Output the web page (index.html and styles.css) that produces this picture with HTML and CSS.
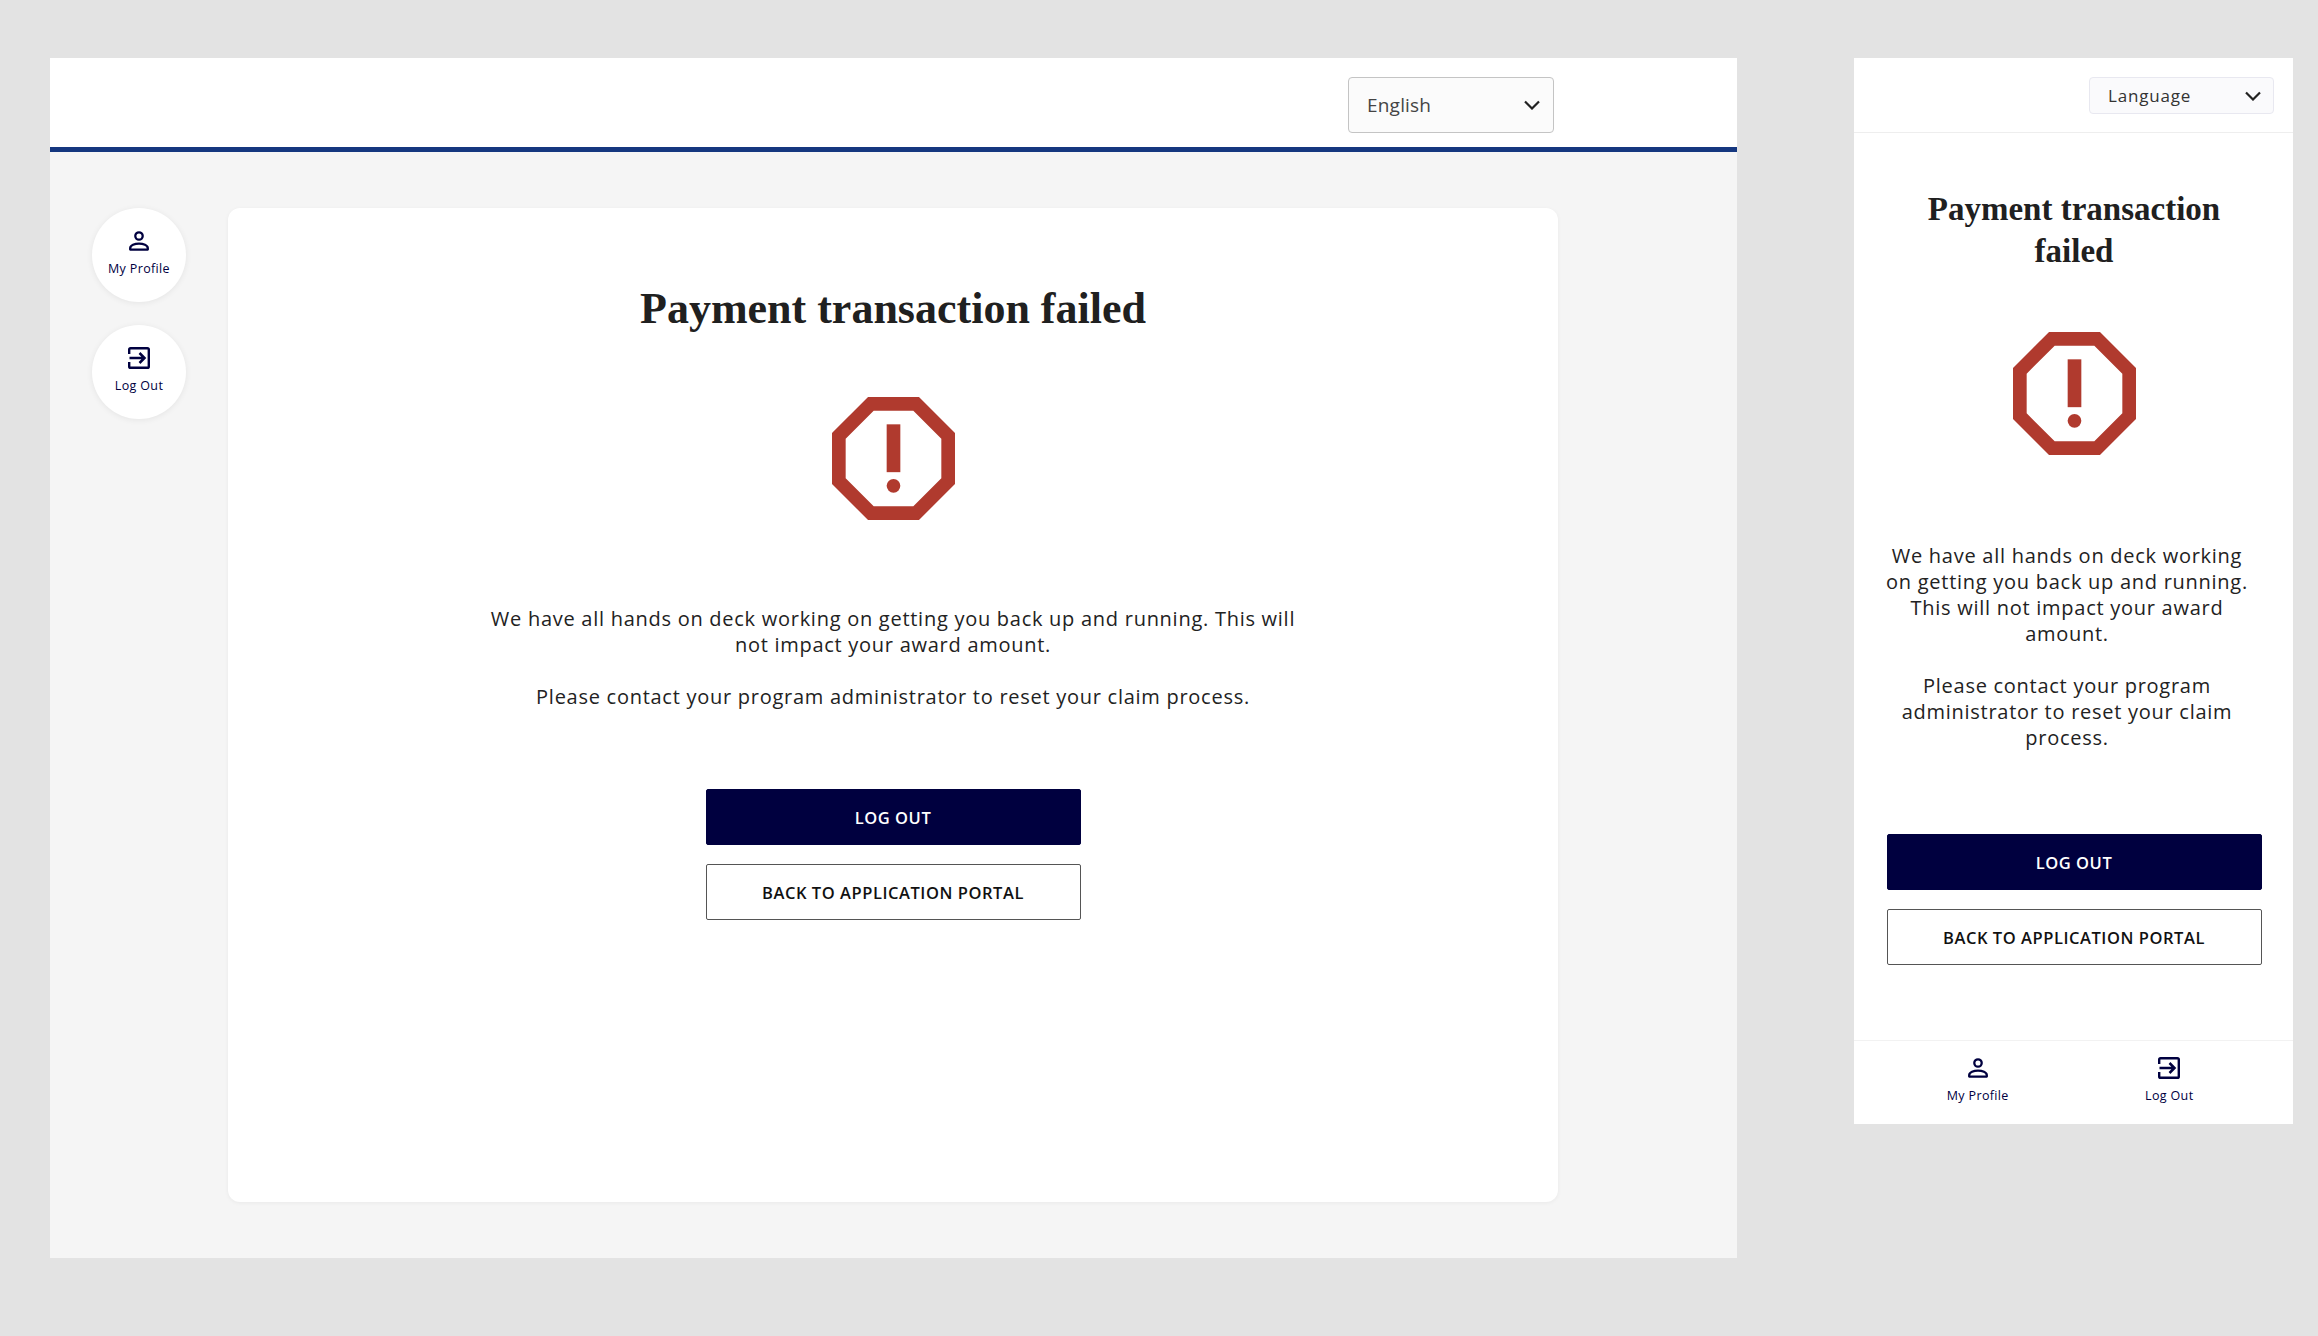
FILE: index.html
```html
<!DOCTYPE html>
<html lang="en">
<head>
<meta charset="utf-8">
<title>Payment transaction failed</title>
<link rel="stylesheet" href="styles.css">
</head>
<body>
<svg class="defs" width="0" height="0" aria-hidden="true">
  <symbol id="i-person" viewBox="0 0 20 20">
    <circle cx="10" cy="5" r="3.7" fill="none" stroke="currentColor" stroke-width="2.300"/>
    <path d="M1.2 18.6v-1.4c0-3 4.6-4.6 8.8-4.6s8.8 1.6 8.8 4.6v1.4z" fill="none" stroke="currentColor" stroke-width="2.300" stroke-linejoin="round"/>
  </symbol>
  <symbol id="i-exit" viewBox="0 0 22 22">
    <path d="M1.200 7V2.600c0-.8.6-1.400 1.400-1.400h16.800c.8 0 1.400.6 1.400 1.400v16.800c0 .8-.6 1.400-1.400 1.400H2.600c-.8 0-1.400-.6-1.400-1.400V15" fill="none" stroke="currentColor" stroke-width="2.400"/>
    <path d="M1.500 11H16M11.500 6 16.500 11 11.500 16" fill="none" stroke="currentColor" stroke-width="2.500"/>
  </symbol>
  <symbol id="i-report" viewBox="3 3 18 18">
    <path d="M15.730 3H8.270L3 8.270v7.460L8.270 21h7.460L21 15.730V8.270L15.730 3zM19 14.900 14.900 19H9.100L5 14.900V9.100L9.100 5h5.800L19 9.100v5.800z"/>
    <circle cx="12" cy="16" r="1"/>
    <rect x="11" y="7" width="2" height="7"/>
  </symbol>
  <symbol id="i-chevron" viewBox="0 0 16 10">
    <path d="M1 1.500 8 8.500 15 1.500" fill="none" stroke="currentColor" stroke-width="2.200"/>
  </symbol>
</svg>

<main class="desktop">
  <header class="desktop-top">
    <div class="select select-lg">
      <span>English</span>
      <svg class="chevron"><use href="#i-chevron"/></svg>
    </div>
  </header>
  <div class="desktop-body">
    <nav class="side-nav">
      <a class="round-link">
        <svg class="ico-person"><use href="#i-person"/></svg>
        <span>My Profile</span>
      </a>
      <a class="round-link">
        <svg class="ico-exit"><use href="#i-exit"/></svg>
        <span>Log Out</span>
      </a>
    </nav>
    <section class="card">
      <h1 class="title">Payment transaction failed</h1>
      <svg class="alert"><use href="#i-report"/></svg>
      <div class="copy">
        <p>We have all hands on deck working on getting you back up and running. This will not impact your award amount.</p>
        <p>Please contact your program administrator to reset your claim process.</p>
      </div>
      <div class="actions">
        <button class="btn btn-primary">LOG OUT</button>
        <button class="btn btn-outline">BACK TO APPLICATION PORTAL</button>
      </div>
    </section>
  </div>
</main>

<main class="mobile">
  <header class="mobile-top">
    <div class="select select-sm">
      <span>Language</span>
      <svg class="chevron"><use href="#i-chevron"/></svg>
    </div>
  </header>
  <section class="mobile-body">
    <h1 class="title title-mobile">Payment transaction failed</h1>
    <svg class="alert alert-mobile"><use href="#i-report"/></svg>
    <div class="copy copy-mobile">
      <p>We have all hands on deck working on getting you back up and running. This will not impact your award amount.</p>
      <p>Please contact your program administrator to reset your claim process.</p>
    </div>
    <div class="actions actions-mobile">
      <button class="btn btn-primary">LOG OUT</button>
      <button class="btn btn-outline">BACK TO APPLICATION PORTAL</button>
    </div>
  </section>
  <footer class="mobile-foot">
    <a class="foot-link">
      <svg class="ico-person"><use href="#i-person"/></svg>
      <span>My Profile</span>
    </a>
    <a class="foot-link">
      <svg class="ico-exit"><use href="#i-exit"/></svg>
      <span>Log Out</span>
    </a>
  </footer>
</main>
</body>
</html>
```

FILE: styles.css
```css
* { box-sizing: border-box; }
html, body { margin: 0; height: 100%; }
body {
  background: #e3e3e3;
  font-family: "Open Sans", "Noto Sans", sans-serif;
  color: #222;
  display: flex;
  align-items: flex-start;
  gap: 117px;
  padding: 58px 0 0 50px;
  overflow: hidden;
}
.defs { position: absolute; }
p { margin: 0; }

.desktop {
  width: 1687px;
  height: 1200px;
  flex: none;
  background: #f5f5f5;
  display: flex;
  flex-direction: column;
}
.desktop-top {
  height: 94px;
  flex: none;
  background: #fff;
  border-bottom: 5px solid #15377f;
  padding: 19px 0 0 1298px;
}
.desktop-body {
  display: flex;
  gap: 42px;
  padding: 56px 0 0 42px;
}
.side-nav { display: flex; flex-direction: column; gap: 23px; }
.round-link {
  width: 94px;
  height: 94px;
  border-radius: 50%;
  background: #fff;
  box-shadow: 0 1px 6px rgba(0,0,0,.07);
  display: flex;
  flex-direction: column;
  align-items: center;
  padding-top: 23px;
  color: #00003f;
  font-size: 12.500px;
  letter-spacing: .35px;
  line-height: 17px;
}
.ico-person { width: 20px; height: 20px; display: block; margin-bottom: 9px; }
.ico-exit { width: 22px; height: 22px; display: block; margin-top: -1px; margin-bottom: 8px; }
.card {
  width: 1330px;
  height: 994px;
  background: #fff;
  border-radius: 12px;
  box-shadow: 0 1px 4px rgba(0,0,0,.05);
  display: flex;
  flex-direction: column;
  align-items: center;
  padding-top: 77px;
}
.title {
  margin: 0;
  font-family: "Liberation Serif", serif;
  font-weight: 700;
  font-size: 44px;
  line-height: 48px;
  color: #202020;
  text-align: center;
}
.alert { width: 123px; height: 123px; fill: #b03a2e; display: block; margin-top: 64px; }
.copy {
  width: 820px;
  margin-top: 86px;
  font-size: 20px;
  letter-spacing: .73px;
  line-height: 26px;
  text-align: center;
  display: flex;
  flex-direction: column;
  gap: 26px;
}
.actions {
  display: flex;
  flex-direction: column;
  gap: 19px;
  width: 375px;
  margin-top: 79px;
}
.btn {
  height: 56px;
  width: 100%;
  border-radius: 2px;
  font-family: inherit;
  font-size: 16.500px;
  letter-spacing: .55px;
  font-weight: 600;
}
.btn-primary { background: #00003f; color: #fff; border: 1px solid #00003f; }
.btn-outline { background: #fff; color: #111; border: 1px solid #555; }

.select {
  display: flex;
  align-items: center;
  justify-content: space-between;
  border-radius: 4px;
}
.select-lg {
  width: 206px;
  height: 56px;
  padding: 0 13px 0 18px;
  background: #fbfbfb;
  border: 1px solid #c4c4c4;
  color: #444;
  font-size: 19px;
  letter-spacing: .2px;
}
.select-sm {
  width: 185px;
  height: 37px;
  padding: 0 12px 0 18px;
  background: #fafafc;
  border: 1px solid #e8e8f0;
  color: #333;
  font-size: 17px;
  letter-spacing: .8px;
}
.chevron { width: 16px; height: 10px; color: #222; }

.mobile {
  width: 439px;
  height: 1066px;
  flex: none;
  background: #fff;
  display: flex;
  flex-direction: column;
}
.mobile-top {
  height: 75px;
  flex: none;
  border-bottom: 1px solid #eee;
  padding: 19px 19px 0 0;
  display: flex;
  justify-content: flex-end;
  align-items: flex-start;
}
.mobile-body {
  flex: 1;
  display: flex;
  flex-direction: column;
  align-items: center;
  padding: 55px 0 0 1px;
}
.title-mobile { font-size: 33px; line-height: 42px; width: 340px; }
.alert-mobile { margin-top: 60px; }
.copy-mobile { width: 372px; margin: 88px 14px 0 0; }
.actions-mobile { margin-top: 83px; }
.mobile-foot {
  height: 84px;
  flex: none;
  border-top: 1px solid #f2f2f2;
  display: grid;
  grid-template-columns: 1fr 1fr;
  padding: 17px 28px 0;
}
.foot-link {
  display: flex;
  flex-direction: column;
  align-items: center;
  color: #00003f;
  font-size: 12.500px;
  letter-spacing: .35px;
  line-height: 17px;
}
```
